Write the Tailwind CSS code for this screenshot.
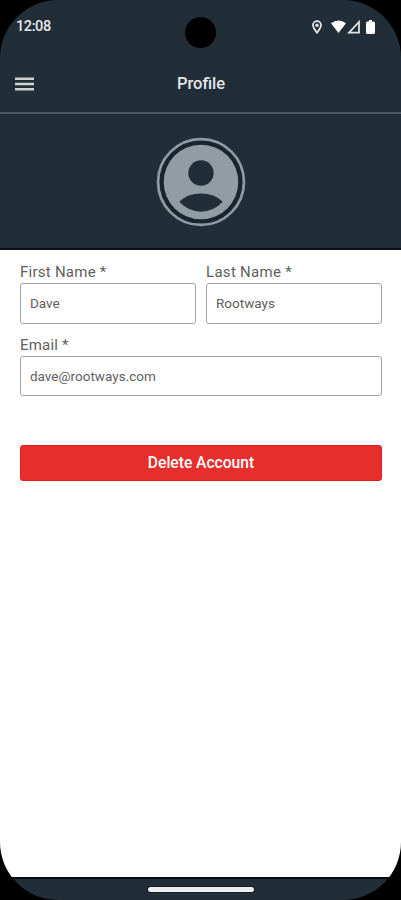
<!DOCTYPE html>
<html lang="en">
<head>
<meta charset="utf-8">
<title>Profile</title>
<script src="https://cdn.jsdelivr.net/npm/@tailwindcss/browser@4"></script>
</head>
<body class="bg-black font-['Roboto',sans-serif]">
<div class="relative flex h-[900px] w-[401px] flex-col overflow-hidden rounded-[58px]">
  <header class="h-[114px] shrink-0 border-b-2 border-[#4b565e] bg-[#222e37]">
    <div class="flex h-[54px] items-center justify-between pr-[26px] pl-4">
      <span class="text-[14.5px] font-medium tracking-[-0.4px] text-[#e6e9eb]">12:08</span>
      <div class="flex items-center">
        <svg class="mr-[9px] h-[14px] w-[10px]" viewBox="0 0 10 14" fill="none" stroke="#dfe3e5" stroke-width="1.8"><path d="M5 12.7C3.5 10.6 1 8 1 5.1a4 4 0 0 1 8 0C9 8 6.500 10.600 5 12.700Z"/><circle cx="5" cy="5.200" r="1.700" fill="#dfe3e5" stroke="none"/></svg>
        <svg class="mr-px h-[14px] w-[15px]" viewBox="0 0 15 14" fill="#fff"><path d="M0 3.200Q7.500-2 15 3.200L7.500 13Z"/></svg>
        <svg class="mr-[6px] h-[14px] w-[13px]" viewBox="0 0 13 14" fill="none" stroke="#dfe3e5" stroke-width="1.800"><path d="M2 12.600 12 2v10.600Z"/></svg>
        <svg class="h-[14px] w-[9px]" viewBox="0 0 9 14" fill="#fff"><path d="M3 0h3v1.400h1.500Q9 1.400 9 3v9.500Q9 14 7.500 14h-6Q0 14 0 12.500V3Q0 1.400 1.500 1.400H3Z"/></svg>
      </div>
    </div>
    <div class="grid h-[60px] grid-cols-[1fr_auto_1fr] items-center pl-[15px]">
      <svg class="h-[14px] w-[19px]" viewBox="0 0 19 14" fill="#cfd2d1"><path d="M0 .5h19v2.500H0zM0 5.700h19v2.500H0zM0 10.900h19v2.500H0z"/></svg>
      <h1 class="pr-[14px] text-[16.500px] font-medium text-[#e3e6e8]">Profile</h1>
    </div>
  </header>
  <section class="flex h-[136px] shrink-0 items-center justify-center border-b-2 border-[#080f15] bg-[#222e37] pt-[2px]">
    <svg class="h-[92px] w-[92px]" viewBox="0 0 90 90"><circle cx="45" cy="45" r="42" fill="#18252e" stroke="#8f9ba3" stroke-width="2.700"/><circle cx="45" cy="45" r="36.500" fill="#919ca4"/><circle cx="45" cy="36.200" r="12.400" fill="#222e37"/><path d="M23.700 64.300Q32 56.300 45 56.300t21.300 8Q57 74 45 74T23.700 64.300Z" fill="#222e37"/></svg>
  </section>
  <main class="flex flex-1 flex-col bg-white pt-3 pr-[19px] pl-5 text-[#606060]">
    <div class="grid grid-cols-2 gap-[10px]">
      <div>
        <div class="h-[21px] text-[15px] leading-5 tracking-[0.25px]">First Name *</div>
        <div class="flex h-[41px] items-center rounded-[3px] border border-[#a0a2a3] px-[9px] text-[13.500px]">Dave</div>
      </div>
      <div>
        <div class="h-[21px] text-[15px] leading-5 tracking-[0.3px]">Last Name *</div>
        <div class="flex h-[41px] items-center rounded-[3px] border border-[#a0a2a3] px-[9px] text-[13.500px]">Rootways</div>
      </div>
    </div>
    <div class="mt-[11px]">
      <div class="h-[21px] text-[15px] leading-5 tracking-[0.2px]">Email *</div>
      <div class="flex h-[40px] items-center rounded-[3px] border border-[#a0a2a3] px-[9px] text-[13.500px]">dave@rootways.com</div>
    </div>
    <div class="mt-[49px] flex h-9 items-center justify-center rounded-[3px] border border-[#dc1f1f] bg-[#e62e2d] pt-px text-[15.600px] font-medium text-white">Delete Account</div>
  </main>
  <footer class="flex h-[23px] shrink-0 items-center justify-center border-t-2 border-[#050b10] bg-[#222e37]">
    <div class="h-[5px] w-[106px] rounded-full bg-[#eceeee] ring-1 ring-[#121d26]"></div>
  </footer>
  <div class="absolute top-[17px] left-[185px] h-[31px] w-[31px] rounded-full bg-black"></div>
</div>
</body>
</html>
